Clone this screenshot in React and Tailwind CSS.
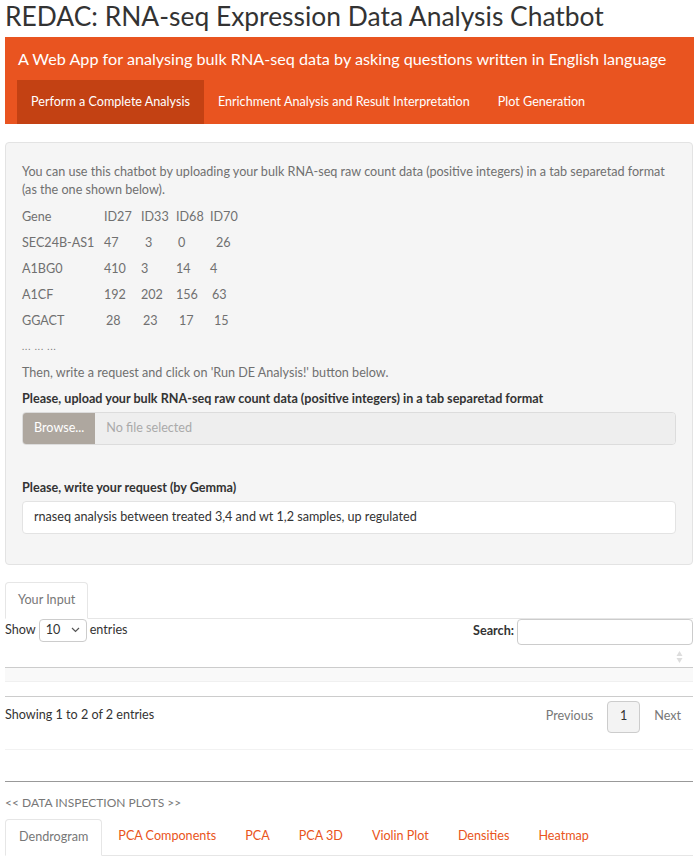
const rows = [
  { gene: "Gene", cells: [["ID27", "pl-0"], ["ID33", "pl-0"], ["ID68", "pl-0"], ["ID70", "pl-0"]] },
  { gene: "SEC24B-AS1", cells: [["47", "pl-0"], ["3", "pl-[4px]"], ["0", "pl-[2px]"], ["26", "pl-[6px]"]] },
  { gene: "A1BG0", cells: [["410", "pl-0"], ["3", "pl-0"], ["14", "pl-0"], ["4", "pl-0"]] },
  { gene: "A1CF", cells: [["192", "pl-0"], ["202", "pl-0"], ["156", "pl-0"], ["63", "pl-[2px]"]] },
  { gene: "GGACT", cells: [["28", "pl-[2px]"], ["23", "pl-[2px]"], ["17", "pl-[3px]"], ["15", "pl-[4px]"]] },
];

const cellWidths = ["w-[37px]", "w-[35px]", "w-[34px]", "w-[34px]"];

const plotTabs = ["PCA Components", "PCA", "PCA 3D", "Violin Plot", "Densities", "Heatmap"];

const App = () => {
  return (
    <div className="min-h-[858px] bg-white pl-[5px] pr-[7px] font-['Lato',sans-serif] text-[12.6px] text-[#333]">
      <h1 className="h-[37px] pt-[1px] text-[26.4px] leading-[30px] text-[#333]">
        REDAC: RNA-seq Expression Data Analysis Chatbot
      </h1>

      <div className="mr-[-1px] bg-[#e95420] px-3">
        <p className="pt-[11px] pb-[10px] pl-[1px] text-[16.2px] leading-[22px] text-white">
          A Web App for analysing bulk RNA-seq data by asking questions written in English language
        </p>
        <div className="flex h-[44px] text-[12.6px] text-white">
          <div className="flex items-center bg-[#c34113] px-[14px]">Perform a Complete Analysis</div>
          <div className="flex items-center px-[14px]">Enrichment Analysis and Result Interpretation</div>
          <div className="flex items-center px-[14px]">Plot Generation</div>
        </div>
      </div>

      <div className="mt-[18px] rounded border border-[#e3e3e3] bg-[#f5f5f5] px-4 pt-[20px] pb-[30px]">
        <p className="leading-[18px] text-[#707070]">
          You can use this chatbot by uploading your bulk RNA-seq raw count data (positive integers) in a tab separetad format (as the one shown below).
        </p>
        <div className="mt-[5px] text-[#707070]">
          {rows.map((row) => (
            <div key={row.gene} className="flex h-[26px] items-center">
              <span className="w-[82px]">{row.gene}</span>
              {row.cells.map(([value, pad], index) => (
                <span key={index} className={`${cellWidths[index]} ${pad}`}>{value}</span>
              ))}
            </div>
          ))}
          <div className="flex h-[26px] items-center text-[9px] tracking-[1px]">... ... ...</div>
          <div className="flex h-[26px] items-center">Then, write a request and click on 'Run DE Analysis!' button below.</div>
        </div>

        <label className="mt-[1px] block font-bold leading-[24px] text-[#333]">
          Please, upload your bulk RNA-seq raw count data (positive integers) in a tab separetad format
        </label>
        <div className="mt-[1px] flex h-[33px] overflow-hidden rounded border border-[#dcdcdc]">
          <div className="flex items-center bg-[#aea79f] px-[11px] text-white">Browse...</div>
          <div className="flex flex-1 items-center bg-[#eeeeee] px-[11px] text-[#aaa]">No file selected</div>
        </div>

        <label className="mt-[31px] block font-bold leading-[24px] text-[#333]">
          Please, write your request (by Gemma)
        </label>
        <div className="mt-[1px] flex h-[33px] items-center rounded border border-[#e3e3e3] bg-white px-[11px] text-[#333]">
          rnaseq analysis between treated 3,4 and wt 1,2 samples, up regulated
        </div>
      </div>

      <div className="mt-[17px] flex border-b border-[#e6e6e6]">
        <div className="mb-[-1px] rounded-t border border-b-white border-[#e6e6e6] bg-white px-[12px] py-[8px] text-[#777]">
          Your Input
        </div>
      </div>

      <div className="flex items-start justify-between">
        <div className="flex items-center gap-[3px]">
          <span>Show</span>
          <div className="flex h-[23px] w-[48px] items-center justify-between rounded border border-[#ccc] px-[6px]">
            <span>10</span>
            <svg width="9" height="6" viewBox="0 0 9 6" fill="none" stroke="#555" strokeWidth="1.2">
              <path d="M1 1l3.5 3.5L8 1" />
            </svg>
          </div>
          <span>entries</span>
        </div>
        <div className="flex items-center gap-[3px]">
          <span className="font-bold">Search:</span>
          <div className="h-[26px] w-[176px] rounded border border-[#ccc] bg-white" />
        </div>
      </div>

      <div className="mt-[5px] flex h-[18px] justify-end border-b border-[#ccc] pr-[10px]">
        <svg width="7" height="14" viewBox="0 0 7 14" fill="#ddd">
          <path d="M3.5 1L6.5 6H0.5z" />
          <path d="M3.5 13L6.5 8H0.5z" />
        </svg>
      </div>
      <div className="h-[14px] border-b border-[#f0f0f0] bg-[#f9f9f9]" />
      <div className="h-[15px] border-b border-[#ccc]" />

      <div className="flex items-center justify-between border-b border-[#f2f2f2] pt-[2px] pb-[16px]">
        <span>Showing 1 to 2 of 2 entries</span>
        <div className="mt-[2px] flex items-center text-[#777]">
          <span className="px-[12px]">Previous</span>
          <span className="mx-[2px] flex h-[32px] w-[33px] items-center justify-center rounded-sm border border-[#ccc] bg-[#f3f3f3] text-[#333]">1</span>
          <span className="px-[12px]">Next</span>
        </div>
      </div>

      <hr className="mt-[31px] border-t border-[#999]" />

      <p className="mt-[12px] text-[12px] text-[#777]">&lt;&lt; DATA INSPECTION PLOTS &gt;&gt;</p>

      <div className="mt-[7px] flex border-b border-[#e6e6e6]">
        <div className="mb-[-1px] mr-[3px] rounded-t border border-b-white border-[#e6e6e6] bg-white px-[13px] py-[8px] text-[#777]">
          Dendrogram
        </div>
        {plotTabs.map((tab) => (
          <div key={tab} className="mr-[3px] px-[13px] py-[8px] text-[#e95420]">{tab}</div>
        ))}
      </div>
    </div>
  );
};

export default App;
